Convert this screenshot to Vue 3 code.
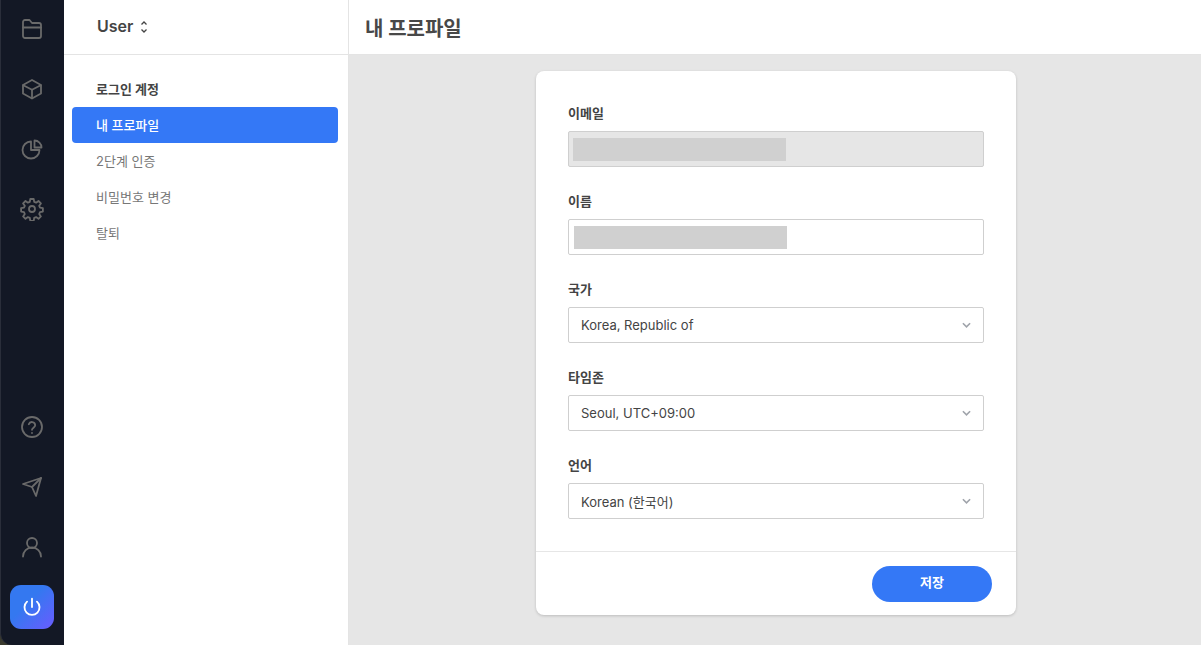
<script setup>
const topIcons = [
  ['M3 5a2 2 0 0 1 2-2h4.500L12 6h7a2 2 0 0 1 2 2v11a2 2 0 0 1-2 2H5a2 2 0 0 1-2-2V5Z', 'M3 10.500h18'],
  ['M12 3l9 5v8.500l-9 5-9-5V8l9-5Z', 'M3.300 8.200L12 12.800l8.700-4.600', 'M12 12.800v8.400'],
  ['M11 4.500A8.500 8.500 0 1 0 19.500 13H11V4.500Z', 'M14.500 3.500a7 7 0 0 1 7 7h-7v-7Z'],
]
const navItems = ['내 프로파일', '2단계 인증', '비밀번호 변경', '탈퇴']
const selects = [
  { label: '국가', value: 'Korea, Republic of' },
  { label: '타임존', value: 'Seoul, UTC+09:00' },
  { label: '언어', value: 'Korean (한국어)' },
]
</script>

<template>
  <div class="app">
    <aside class="rail">
      <div class="rail-group rail-top">
        <div v-for="(paths, i) in topIcons" :key="i" class="rail-btn">
          <svg viewBox="0 0 24 24" class="icon"><path v-for="d in paths" :key="d" :d="d" /></svg>
        </div>
        <div class="rail-btn">
          <svg viewBox="0 0 24 24" class="icon">
            <circle cx="12" cy="12" r="3" />
            <path d="M10.300 2h3.400l.5 2.900 1.900.8 2.400-1.700 2.400 2.400-1.700 2.400.8 1.900 2.900.5v3.400l-2.900.5-.8 1.900 1.700 2.400-2.400 2.400-2.400-1.700-1.900.8-.5 2.900h-3.400l-.5-2.900-1.900-.8-2.400 1.700-2.400-2.400 1.700-2.400-.8-1.900-2.900-.5v-3.400l2.900-.5.8-1.900-1.700-2.400 2.400-2.400 2.400 1.700 1.900-.8.5-2.900Z" />
          </svg>
        </div>
      </div>
      <div class="rail-group">
        <div class="rail-btn">
          <svg viewBox="0 0 24 24" class="icon">
            <circle cx="12" cy="12" r="10" />
            <path d="M8.800 9.200a3.300 3.300 0 0 1 6.400 1c0 2.200-3.200 2.700-3.200 4.600" />
            <path d="M12 17.800v.2" />
          </svg>
        </div>
        <div class="rail-btn">
          <svg viewBox="0 0 24 24" class="icon">
            <path d="M3 9L21 3l-5 18-4-9-9-3Z" />
            <path d="M12 12l9-9" />
          </svg>
        </div>
        <div class="rail-btn">
          <svg viewBox="0 0 24 24" class="icon">
            <circle cx="12" cy="8" r="5" />
            <path d="M3 21.500a9 9 0 0 1 18 0" />
          </svg>
        </div>
        <div class="power">
          <svg viewBox="0 0 24 24" class="power-icon">
            <path d="M12 3v9" />
            <path d="M6.600 6.200a8.200 8.200 0 1 0 10.800 0" />
          </svg>
        </div>
      </div>
    </aside>

    <nav class="side">
      <div class="side-head">
        <span class="side-name">User</span>
        <svg viewBox="0 0 10 16" class="updown"><path d="M2.500 5.500L5 3l2.500 2.500" /><path d="M2.500 10.500L5 13l2.500-2.500" /></svg>
      </div>
      <div class="side-body">
        <div class="side-title">로그인 계정</div>
        <div v-for="(item, i) in navItems" :key="item" class="side-item" :class="{ active: i === 0 }">{{ item }}</div>
      </div>
    </nav>

    <div class="main">
      <header class="top"><h1>내 프로파일</h1></header>
      <div class="content">
        <section class="card">
          <div class="form">
            <div class="field">
              <label>이메일</label>
              <div class="input disabled"><span class="mask"></span></div>
            </div>
            <div class="field">
              <label>이름</label>
              <div class="input"><span class="mask name"></span></div>
            </div>
            <div v-for="s in selects" :key="s.label" class="field">
              <label>{{ s.label }}</label>
              <div class="input select">
                <span>{{ s.value }}</span>
                <svg viewBox="0 0 10 6" class="chev"><path d="M1 1l4 4 4-4" /></svg>
              </div>
            </div>
          </div>
          <footer class="foot"><button type="button" class="save">저장</button></footer>
        </section>
      </div>
    </div>
  </div>
</template>

<style>
html, body { margin: 0; height: 100%; overflow: hidden; }
</style>

<style scoped>
.app {
  display: flex;
  width: 1201px;
  height: 645px;
  overflow: hidden;
  font-family: Inter, "Noto Sans CJK KR", sans-serif;
  color: #444;
  background: #3a3a2e;
}
.rail {
  width: 64px;
  flex: none;
  box-sizing: border-box;
  display: flex;
  flex-direction: column;
  justify-content: space-between;
  padding: 0 0 16px;
  background: #131825;
  border-left: 1px solid #2a2e3a;
  border-bottom-left-radius: 12px;
}
.rail-group { display: flex; flex-direction: column; align-items: center; margin-left: -1px; }
.rail-top { margin-top: -1px; }
.rail-btn {
  width: 44px;
  height: 60px;
  display: flex;
  align-items: center;
  justify-content: center;
}
.icon {
  width: 24px;
  height: 24px;
  fill: none;
  stroke: #6a6a6a;
  stroke-width: 1.8;
  stroke-linejoin: round;
  stroke-linecap: round;
}
.power {
  width: 44px;
  height: 44px;
  margin-top: 8px;
  border-radius: 11px;
  display: flex;
  align-items: center;
  justify-content: center;
  background: linear-gradient(135deg, #3478f0 40%, #6a5cff 100%);
}
.power-icon {
  width: 22px;
  height: 22px;
  fill: none;
  stroke: #fff;
  stroke-width: 2;
  stroke-linecap: round;
}
.side {
  width: 284px;
  flex: none;
  background: #fff;
  border-right: 1px solid #e4e4e4;
}
.side-head {
  height: 54px;
  display: flex;
  align-items: center;
  gap: 6px;
  padding-left: 33px;
  font-size: 16px;
  font-weight: 600;
  border-bottom: 1px solid #e4e4e4;
}
.side-name { margin-top: -2px; }
.updown {
  width: 10px;
  height: 16px;
  fill: none;
  stroke: #444;
  stroke-width: 1.3;
}
.side-body { padding: 16px 10px 0 8px; }
.side-title {
  height: 36px;
  line-height: 36px;
  padding-left: 24px;
  font-size: 13px;
  font-weight: 700;
}
.side-item {
  height: 36px;
  line-height: 36px;
  padding-left: 24px;
  font-size: 13px;
  color: #777;
  border-radius: 4px;
}
.side-item.active { background: #3478f6; color: #fff; font-weight: 500; }
.main { flex: 1; display: flex; flex-direction: column; min-width: 0; }
.top {
  height: 54px;
  flex: none;
  display: flex;
  align-items: center;
  padding-left: 16px;
  background: #fff;
  border-bottom: 1px solid #e4e4e4;
}
.top h1 { margin: 0; font-size: 20px; font-weight: 700; color: #484848; }
.content {
  flex: 1;
  background: #e6e6e6;
  padding: 16px 0 0 2px;
  display: flex;
  justify-content: center;
}
.card {
  width: 480px;
  height: 544px;
  background: #fff;
  border-radius: 8px;
  box-shadow: 0 1px 3px rgba(0, 0, 0, 0.18);
  display: flex;
  flex-direction: column;
}
.form {
  flex: 1;
  padding: 32px 32px 0;
  display: flex;
  flex-direction: column;
  gap: 24px;
}
.field label {
  display: block;
  height: 20px;
  line-height: 20px;
  margin-bottom: 8px;
  font-size: 13px;
  font-weight: 700;
  transform: translateY(-0.5px);
}
.input {
  box-sizing: border-box;
  height: 36px;
  border: 1px solid #cfcfcf;
  border-radius: 2px;
  display: flex;
  align-items: center;
  background: #fff;
}
.input.disabled { background: #e6e6e6; padding-left: 4px; }
.mask { width: 213px; height: 23px; background: #d0d0d0; }
.mask.name { margin-left: 5px; }
.select {
  justify-content: space-between;
  padding: 0 12px;
  font-size: 13px;
  color: #444;
}
.chev {
  width: 9px;
  height: 6px;
  fill: none;
  stroke: #a0a4ab;
  stroke-width: 1.8;
}
.foot {
  height: 63px;
  flex: none;
  display: flex;
  align-items: center;
  justify-content: flex-end;
  padding-right: 24px;
  border-top: 1px solid #e6e6e6;
}
.save {
  width: 120px;
  height: 36px;
  border: 0;
  border-radius: 18px;
  background: #3478f6;
  color: #fff;
  font-family: inherit;
  font-size: 13px;
  font-weight: 700;
  line-height: 1;
  padding: 0 0 2px;
}
</style>
